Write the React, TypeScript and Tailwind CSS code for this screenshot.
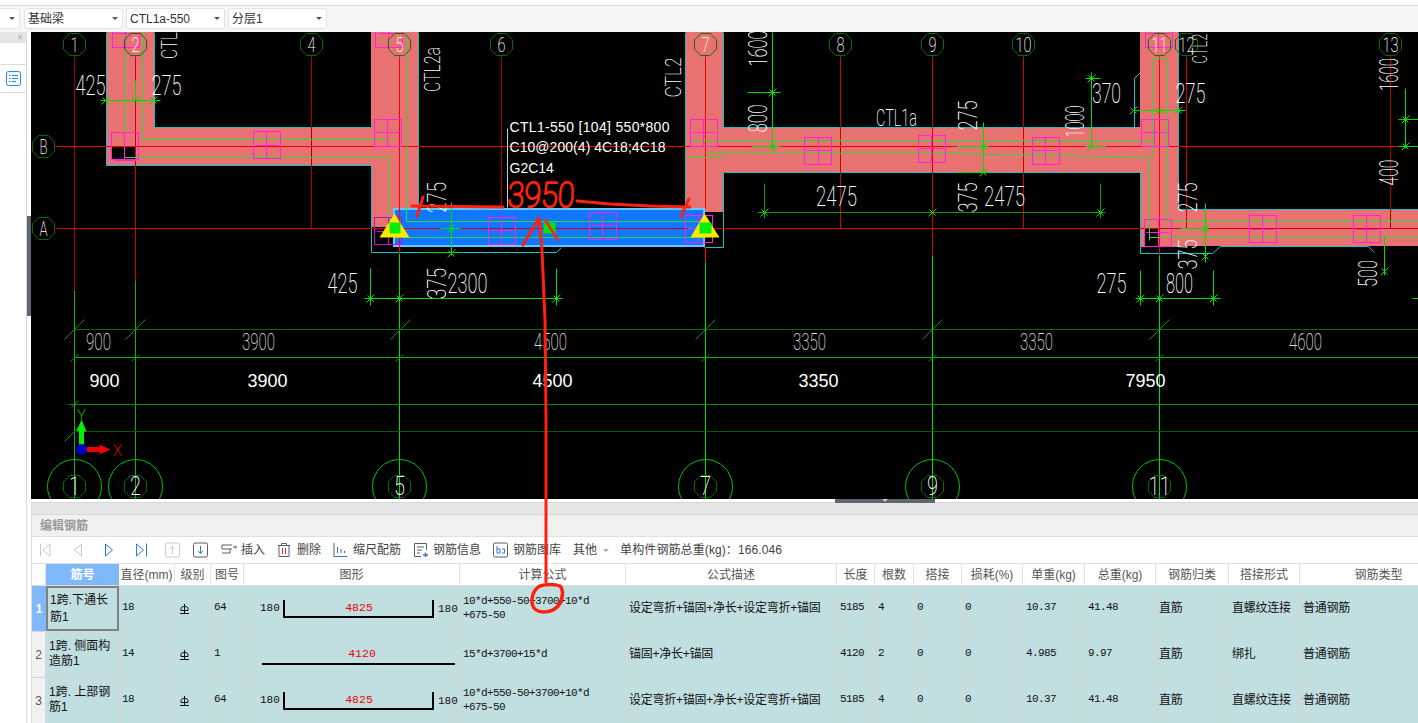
import type { ReactNode } from 'react'

const cadFont = 'Roboto, "Liberation Sans", sans-serif'
const gridCols =
  'grid grid-cols-[14px_73px_56px_36px_33px_216px_166px_211px_38px_39px_48px_61px_62px_71px_73px_71px_158px]'

const RED = '#d00000'
const DARK_RED = '#a80000'
const LIME = '#00e000'
const BEAM = '#e87272'
const CYAN = '#10c4c8'
const MAGENTA = '#ff20e0'

const headers = ['筋号', '直径(mm)', '级别', '图号', '图形', '计算公式', '公式描述', '长度', '根数', '搭接', '损耗(%)', '单重(kg)', '总重(kg)', '钢筋归类', '搭接形式', '钢筋类型']

const rows = [
  { no: '1', name: '1跨.下通长\n筋1', dia: '18', fig: '64', shape: 'u', formula: '10*d+550-50+3700+10*d\n+675-50', desc: '设定弯折+锚固+净长+设定弯折+锚固', len: '5185', n: '4', lap: '0', loss: '0', unit: '10.37', total: '41.48', cat: '直筋', conn: '直螺纹连接', type: '普通钢筋' },
  { no: '2', name: '1跨. 侧面构\n造筋1', dia: '14', fig: '1', shape: 'line', formula: '15*d+3700+15*d', desc: '锚固+净长+锚固', len: '4120', n: '2', lap: '0', loss: '0', unit: '4.985', total: '9.97', cat: '直筋', conn: '绑扎', type: '普通钢筋' },
  { no: '3', name: '1跨. 上部钢\n筋1', dia: '18', fig: '64', shape: 'u', formula: '10*d+550-50+3700+10*d\n+675-50', desc: '设定弯折+锚固+净长+设定弯折+锚固', len: '5185', n: '4', lap: '0', loss: '0', unit: '10.37', total: '41.48', cat: '直筋', conn: '直螺纹连接', type: '普通钢筋' },
]

// thin stretched CAD lettering, rotated when the label runs along a vertical dimension
function Label({ x, y, t, w, size = 27, rot = false, fill = '#fff' }: { x: number; y: number; t: string; w: number; size?: number; rot?: boolean; fill?: string }) {
  return (
    <text
      transform={`translate(${x} ${y})${rot ? ' rotate(-90)' : ''}`}
      textAnchor="middle"
      textLength={w}
      lengthAdjust="spacingAndGlyphs"
      fontFamily={cadFont}
      fontWeight={200}
      fontSize={size}
      fill={fill}
    >
      {t}
    </text>
  )
}

function octagon(x: number, y: number) {
  return [0, 1, 2, 3, 4, 5, 6, 7]
    .map((i) => `${x + 12 * Math.cos((i * Math.PI) / 4 + 0.39)},${y + 12 * Math.sin((i * Math.PI) / 4 + 0.39)}`)
    .join(' ')
}

function Bubble({ x, y, t }: { x: number; y: number; t: string }) {
  return (
    <g>
      <polygon points={octagon(x, y)} fill="none" stroke="#087008" strokeWidth={1} />
      <Label x={x} y={y + 7} t={t} w={t.length * 8} size={20} />
    </g>
  )
}

function FootBubble({ x, t }: { x: number; t: string }) {
  return (
    <g>
      <circle cx={x} cy={486} r={27} fill="none" stroke="#00c000" strokeWidth={1} />
      <polygon points={octagon(x, 486)} fill="none" stroke="#087008" strokeWidth={1} />
      <Label x={x} y={494} t={t} w={t.length * 11} size={26} />
    </g>
  )
}

function Tick({ x, y, c = LIME }: { x: number; y: number; c?: string }) {
  return <path d={`M${x - 4} ${y + 4}L${x + 4} ${y - 4}M${x - 3} ${y - 3}L${x + 3} ${y + 3}`} stroke={c} fill="none" strokeWidth={1} />
}

function Box({ x, y, w = 27, h = 27, c = MAGENTA, cx, cy }: { x: number; y: number; w?: number; h?: number; c?: string; cx?: number; cy?: number }) {
  const vx = cx ?? x + Math.floor(w / 2)
  const hy = cy ?? y + Math.floor(h / 2)
  return (
    <g stroke={c} fill="none" strokeWidth={1}>
      <rect x={x} y={y} width={w} height={h} />
      <path d={`M${vx} ${y}V${y + h}M${x + 2} ${hy}H${x + w - 2}`} />
    </g>
  )
}

function CadDrawing() {
  return (
    <svg className="block h-[467px] w-[1387px] shrink-0" viewBox="31 32 1387 467">
      <rect x={31} y={32} width={1387} height={467} fill="#000" />

      {/* beams */}
      <g fill={BEAM} stroke="none">
        <rect x={107} y={32} width={47} height={133} />
        <rect x={107} y={127} width={311} height={38} />
        <rect x={371} y={32} width={47} height={186} />
        <rect x={371} y={165} width={23} height={62} />
        <rect x={686} y={32} width={37} height={180} />
        <rect x={723} y={127} width={417} height={45} />
        <rect x={1140} y={32} width={38} height={215} />
        <rect x={1178} y={209} width={240} height={37} />
      </g>
      <rect x={111} y={147} width={24} height={13} fill="#000" />
      <rect x={1144} y={228} width={15} height={18} fill="#000" />

      {/* selected beam */}
      <rect x={394} y={209} width={310} height={37} fill="#1177ff" stroke="#62c8ff" strokeWidth={2} />

      {/* half-pixel offset keeps the 1px strokes on whole pixels */}
      <g transform="translate(0.5 0.5)">
        {/* beam outlines */}
        <g stroke={CYAN} fill="none" strokeWidth={1}>
          <path d="M106 32V165H371V252H556L561 247" />
          <path d="M154 32V127H371M418 32V208" />
          <path d="M685 32V208M723 247V172H1140V253H1212L1220 246H1368L1374 252" />
          <path d="M723 32V127H1134V78L1140 72" />
          <path d="M1178 32V209H1418" />
          <path d="M723 247H704" />
        </g>

        {/* grid axes */}
        <g fill="none" strokeWidth={1}>
          <path d="M74 56V290" stroke={DARK_RED} />
          <path d="M135 56V280" stroke={RED} />
          <path d="M311 56V228" stroke={DARK_RED} />
          <path d="M399 56V253" stroke="#ff0000" />
          <path d="M501 56V208" stroke={DARK_RED} />
          <path d="M705 56V208M705 246V262" stroke="#ff0000" />
          <path d="M840 56V228" stroke={RED} />
          <path d="M932 56V255" stroke={RED} />
          <path d="M1023 56V228" stroke={RED} />
          <path d="M1159 56V255" stroke="#ff0000" />
          <path d="M1186 56V228" stroke={RED} />
          <path d="M1390 56V228" stroke={DARK_RED} />
          <path d="M55 146H1418" stroke="#f00000" />
          <path d="M55 228H1418" stroke={RED} />
        </g>

        {/* rebar lines */}
        <g stroke="#30d830" fill="none" strokeWidth={1}>
          <path d="M124 32V157H389V230" />
          <path d="M142 32V139H392" />
          <path d="M406 32V221H705" />
          <path d="M393 237H705" />
          <path d="M690 140H1150" />
          <path d="M706 153H950L1149 157V240" />
          <path d="M1153 156V58H1166V221H1418" />
          <path d="M1149 237H1418" />
          <path d="M722 157H685" />
        </g>

        {/* bar marks */}
        <Box x={111} y={132} cx={124} cy={160} />
        <Box x={253} y={131} cy={145} />
        <Box x={374} y={119} cx={387} cy={132} />
        <Box x={374} y={217} c="#d000d0" cx={388} cy={231} />
        <Box x={112} y={20} />
        <Box x={375} y={20} />
        <Box x={488} y={217} />
        <Box x={589} y={212} cy={225} />
        <Box x={690} y={119} />
        <Box x={804} y={137} cx={818} cy={150} />
        <Box x={918} y={135} cy={148} />
        <Box x={1032} y={137} cy={150} />
        <Box x={1141} y={119} cx={1154} cy={132} />
        <Box x={1144} y={219} cx={1158} cy={232} />
        <Box x={1249} y={215} cy={229} />
        <Box x={1353} y={215} cy={229} />
        <Box x={1145} y={20} />
        <Box x={685} y={215} />

        {/* support markers */}
        <polygon points="394,213 379,237 409,237" fill="#ffe800" />
        <polygon points="704,213 690,237 719,237" fill="#ffe800" />
        <rect x={389} y={222} width={11} height={11} fill="#00f000" />
        <rect x={699} y={222} width={12} height={11} fill="#00f000" />
        <rect x={543} y={222} width={12} height={11} fill="#00e800" />

        {/* dimension lines */}
        <g stroke={LIME} fill="none" strokeWidth={1}>
          <path d="M100 100H160M135 80V100" />
          <path d="M451 202V255M440 228H460M420 252H460" />
          <path d="M364 298H562M370 268V305M399 253V499M556 268V305" />
          <path d="M705 262V499" />
          <path d="M772 32V150M747 92H780M752 146H780" />
          <path d="M983 122V172M956 146H988M956 172H988" />
          <path d="M1091 72V146M1085 78H1100M1085 146H1105" />
          <path d="M1133 110H1185" />
          <path d="M1205 203V262M1180 228H1208" />
          <path d="M1135 298H1220M1140 270V305M1213 270V305M1159 255V499" />
          <path d="M1384 235V275M1405 88V148M1398 119H1418M1398 146H1418M1412 298H1418" />
          <path d="M932 255V499" />
        </g>
        <path d="M74 290V499M135 280V499" stroke="#10b010" fill="none" />
        <path d="M757 212H1105M764 183V218M1100 183V218" stroke="#0a9a0a" strokeWidth={1} fill="none" />
        <path d="M74 329H1418" stroke="#0a6a0a" strokeWidth={1} />
        <path d="M74 357H1418" stroke="#10b010" strokeWidth={1} />
        <path d="M68 404H1418" stroke="#0a8a0a" strokeWidth={1} />
        <path d="M85 431H1418" stroke="#075a07" strokeWidth={1} />
        {[
          [105, 100], [135, 100], [153, 100], [451, 228], [451, 253], [370, 298], [399, 298], [556, 298], [772, 92], [772, 146],
          [983, 146], [983, 172], [1091, 78], [1091, 146], [1133, 110], [1159, 110], [1178, 110], [764, 212], [932, 212], [1100, 212],
          [1205, 228], [1205, 256], [1140, 298], [1159, 298], [1213, 298], [1384, 271], [1405, 119], [1405, 146],
        ].map(([x, y]) => (
          <Tick key={`${x}-${y}`} x={x} y={y} />
        ))}
        <path d="M64 339L84 319M125 339L145 319M390 339L410 319M695 339L715 319M922 339L942 319M1149 339L1169 319M70 361L78 354M131 361L139 354M395 361L403 354M701 361L709 354M928 361L936 354M1155 361L1163 354M71 407L78 400M64 441L82 423" stroke="#0a8a0a" fill="none" />

        {/* axis bubbles */}
        {[
          [74, '1'], [135, '2'], [311, '4'], [399, '5'], [501, '6'], [705, '7'], [840, '8'], [932, '9'], [1023, '10'], [1159, '11'], [1186, '12'], [1390, '13'],
        ].map(([x, t]) => (
          <Bubble key={t} x={x as number} y={44} t={t as string} />
        ))}
        <Bubble x={43} y={146} t="B" />
        <Bubble x={43} y={228} t="A" />

        {/* beam names and dimensions */}
        <Label x={176} y={45} t="CTL" w={27} size={22} rot />
        <Label x={439} y={69} t="CTL2a" w={45} size={22} rot />
        <Label x={680} y={77} t="CTL2" w={40} size={22} rot />
        <Label x={896} y={125} t="CTL1a" w={41} size={23} />
        <Label x={1206} y={48} t="CTL2" w={30} size={20} rot />
        <Label x={90} y={94} t="425" w={30} />
        <Label x={166} y={94} t="275" w={30} />
        <Label x={766} y={48} t="1600" w={36} size={26} rot />
        <Label x={766} y={118} t="800" w={28} size={26} rot />
        <Label x={976} y={115} t="275" w={30} size={26} rot />
        <Label x={1106} y={102} t="370" w={29} />
        <Label x={1083} y={121} t="1000" w={32} size={26} rot />
        <Label x={1190} y={102} t="275" w={30} />
        <Label x={1397} y={74} t="1600" w={33} size={26} rot />
        <Label x={1397} y={172} t="400" w={26} size={26} rot />
        <Label x={836} y={205} t="2475" w={41} />
        <Label x={976} y={197} t="375" w={30} size={26} rot />
        <Label x={1004} y={205} t="2475" w={41} />
        <Label x={1196} y={197} t="275" w={30} size={26} rot />
        <Label x={1196} y={254} t="375" w={30} size={26} rot />
        <Label x={1111} y={292} t="275" w={30} />
        <Label x={1179} y={292} t="800" w={27} />
        <Label x={1376} y={273} t="500" w={27} size={26} rot />
        <Label x={342} y={292} t="425" w={30} />
        <Label x={445} y={283} t="375" w={31} size={26} rot />
        <Label x={467} y={292} t="2300" w={40} />
        <Label x={445} y={197} t="275" w={31} size={26} rot />

        {[
          [98, '900', 25], [258, '3900', 33], [550, '4500', 33], [809, '3350', 33], [1036, '3350', 33], [1305, '4600', 33],
        ].map(([x, t, w]) => (
          <Label key={`${x}`} x={x as number} y={349} t={t as string} w={w as number} size={24} fill="#ddd" />
        ))}
        {[
          [104, '900'], [267, '3900'], [552, '4500'], [818, '3350'], [1145, '7950'],
        ].map(([x, t]) => (
          <text key={`${x}`} x={x as number} y={386} textAnchor="middle" fontFamily="Liberation Sans, sans-serif" fontSize={18} fill="#fff">
            {t}
          </text>
        ))}

        {/* beam tag */}
        <path d="M507 128V207" stroke="#ccc" />
        <g fontFamily="Liberation Sans, sans-serif" fontSize={14} fill="#fff">
          <text x={509} y={131} textLength={160}>CTL1-550 [104] 550*800</text>
          <text x={509} y={151} textLength={156}>C10@200(4) 4C18;4C18</text>
          <text x={509} y={172}>G2C14</text>
        </g>

        {/* UCS icon */}
        <path d="M81 448V426" stroke="#00f000" strokeWidth={5} />
        <polygon points="81,419 76,431 86,431" fill="#00f000" />
        <path d="M86 449H102" stroke="#f00000" strokeWidth={5} />
        <polygon points="110,449 99,444 99,454" fill="#f00000" />
        <circle cx={81} cy={449} r={5.5} fill="#0000c0" />
        <text x={81} y={419} textAnchor="middle" fontFamily={cadFont} fontWeight={200} fontSize={15} fill="#00f000">Y</text>
        <text x={117} y={455} textAnchor="middle" fontFamily={cadFont} fontWeight={200} fontSize={16} fill="#ff0000">X</text>

        {/* axis feet */}
        {[
          [74, '1'], [135, '2'], [399, '5'], [705, '7'], [932, '9'], [1159, '11'],
        ].map(([x, t]) => (
          <FootBubble key={t} x={x as number} t={t as string} />
        ))}
      </g>
    </svg>
  )
}

// hand-drawn markup that lies over the whole window
function Markup() {
  return (
    <svg className="pointer-events-none absolute inset-0 h-[723px] w-[1418px]" viewBox="0 0 1418 723">
      <g stroke="#ff2010" strokeWidth={3} fill="none" strokeLinecap="round" strokeLinejoin="round">
        <path d="M412 206L503 207M423 197L417 216" />
        <path d="M577 201L610 204L650 206L690 207M689 199L681 216" />
        <path d="M523 245L539 218L542 250L545 320L546 420L546 582" />
        <path d="M545 220L558 240" strokeWidth={2.5} />
        <path d="M540 586C532 590 530 602 534 608C539 614 552 613 558 606C563 600 564 590 560 586C555 584 546 584 540 586Z" strokeWidth={3.5} />
      </g>
      <text transform="translate(507 207) skewX(-3)" textLength={67} lengthAdjust="spacingAndGlyphs" fontFamily="Roboto, sans-serif" fontWeight={100} fontSize={35} fill="#ff2010" stroke="#ff2010" strokeWidth={1.8} strokeLinejoin="round">
        3950
      </text>
    </svg>
  )
}

function Select({ label, className }: { label: string; className: string }) {
  return (
    <div className={`flex h-[21px] items-center justify-between rounded-[3px] border border-[#e4e4e4] bg-white pl-[3px] pr-[4px] text-[12px] text-[#333] ${className}`}>
      <span>{label}</span>
      <span className="border-x-[3px] border-t-[3px] border-x-transparent border-t-[#555]" />
    </div>
  )
}

function Icon({ w = 14, children, className = '' }: { w?: number; children: ReactNode; className?: string }) {
  return (
    <svg width={w} height={16} viewBox={`0 0 ${w} 16`} fill="none" className={`shrink-0 ${className}`}>
      {children}
    </svg>
  )
}

function GradeMark() {
  return (
    <svg width={9} height={10} viewBox="0 0 9 10" fill="none" stroke="#111" strokeWidth={1}>
      <path d="M1 6.5V4.5C1 3 2.5 2.5 4.5 2.5S8 3 8 4.5V6.5Z" />
      <path d="M4.5 0V9M0 9.5H9" />
    </svg>
  )
}

function ShapeCell({ kind }: { kind: string }) {
  const mono = 'Liberation Mono, monospace'
  if (kind === 'line') {
    return (
      <svg width={216} height={45} viewBox="0 0 216 45" className="block">
        <text x={118} y={25} textAnchor="middle" fontFamily={mono} fontSize={11.5} fill="#f00000">4120</text>
        <path d="M18 32H211" stroke="#000" strokeWidth={2} />
      </svg>
    )
  }
  return (
    <svg width={216} height={45} viewBox="0 0 216 45" className="block">
      <text x={16} y={25} fontFamily={mono} fontSize={11} fill="#111">180</text>
      <path d="M40 14V31H189V14" stroke="#000" strokeWidth={2} fill="none" />
      <text x={115} y={25} textAnchor="middle" fontFamily={mono} fontSize={11.5} fill="#f00000">4825</text>
      <text x={194} y={26} fontFamily={mono} fontSize={11} fill="#111">180</text>
    </svg>
  )
}

function Num({ children }: { children: ReactNode }) {
  return <div className="flex items-center border-r border-[#d6d6d6] pb-[2px] pl-[3px] font-['Liberation_Mono','Noto_Sans_CJK_SC',monospace] text-[11px] tracking-[-0.6px] text-[#111]">{children}</div>
}

function Txt({ children }: { children: ReactNode }) {
  return <div className="flex items-center whitespace-nowrap border-r border-[#d6d6d6] pb-[2px] pl-[3px] text-[12px] tracking-[-0.25px] text-[#111]">{children}</div>
}

export default function App() {
  return (
    <div className="relative flex h-[723px] w-[1418px] flex-col overflow-hidden bg-white font-['Liberation_Sans','Noto_Sans_CJK_SC',sans-serif]">
      {/* top selectors */}
      <div className="h-[6px] shrink-0 border-b border-[#d8d8d8] bg-white" />
      <div className="flex h-[26px] shrink-0 items-center gap-[3px] bg-[#f6f6f6] pb-[1px]">
        <Select label="" className="w-[20px] rounded-l-none border-l-0" />
        <Select label="基础梁" className="ml-[1px] w-[99px]" />
        <Select label="CTL1a-550" className="w-[99px]" />
        <Select label="分层1" className="w-[99px]" />
      </div>

      <div className="flex min-h-0 flex-1">
        {/* collapsed side panel */}
        <aside className="relative w-[31px] shrink-0">
          <div className="h-full w-[27px] border-r border-[#d8d8d8] bg-white">
            <div className="flex h-[11px] items-center justify-end bg-[#e6e6e6] pr-[3px] text-[10px] leading-none text-[#aaa]">×</div>
            <div className="h-[22px] border-b border-[#dcdcdc]" />
            <div className="flex h-[28px] items-center justify-center border-b border-[#dcdcdc]">
              <svg width={15} height={15} viewBox="0 0 15 15" fill="none" stroke="#2a82f0" strokeWidth={1}>
                <rect x={0.5} y={0.5} width={14} height={14} rx={2} />
                <path d="M3 4.5H4.5M6 4.5H12M3 7.5H4.5M6 7.5H12M3 10.5H4.5M6 10.5H10" />
              </svg>
            </div>
          </div>
          <div className="absolute left-[27px] top-[184px] h-[100px] w-[4px] bg-[#5e6670]" />
        </aside>

        <main className="flex min-w-0 flex-1 flex-col">
          <CadDrawing />

          {/* splitter */}
          <div className="relative h-[4px] shrink-0 border-b border-[#d8d8d8] bg-white">
            <div className="absolute left-[804px] top-0 flex h-[4px] w-[100px] justify-center bg-[#5e6670]">
              <span className="border-x-[3px] border-t-[3px] border-x-transparent border-t-[#c8c8c8]" />
            </div>
          </div>

          <div className="flex min-h-0 flex-1 flex-col border-l border-[#dcdcdc]">
            <div className="h-[12px] shrink-0 border-b border-[#d6d6d6] bg-[#e6e6e6]" />
            <div className="flex h-[22px] shrink-0 items-center border-b border-[#e0e0e0] bg-[#f1f1f1] pl-[8px] text-[12px] font-bold text-[#999]">编辑钢筋</div>

            {/* toolbar */}
            <div className="flex h-[27px] shrink-0 items-center border-b border-[#e0e0e0] bg-white pl-[8px] text-[12px] text-[#444]">
              <Icon w={11}>
                <path d="M.5 1.5V14.5M10 2L3 8L10 14Z" stroke="#c8c8c8" />
              </Icon>
              <Icon w={8} className="ml-[23px]">
                <path d="M7.5 2L.5 8L7.5 14Z" stroke="#c8c8c8" />
              </Icon>
              <Icon w={8} className="ml-[23px]">
                <path d="M.5 2L7.5 8L.5 14Z" stroke="#2e78d8" />
              </Icon>
              <Icon w={11} className="ml-[23px]">
                <path d="M.5 2L7.5 8L.5 14ZM10.5 1.5V14.5" stroke="#2e78d8" />
              </Icon>
              <Icon w={15} className="ml-[18px]">
                <rect x={.5} y={1} width={14} height={14} rx={1.5} stroke="#ccc" />
                <path d="M7.5 12V5M5 7L7.5 4.5L10 7" stroke="#ccc" />
              </Icon>
              <Icon w={15} className="ml-[13px]">
                <rect x={.5} y={1} width={14} height={14} rx={1.5} stroke="#556070" />
                <path d="M7.5 4V11M5 9L7.5 11.5L10 9" stroke="#2e78d8" />
              </Icon>
              <Icon w={16} className="ml-[13px]">
                <path d="M11 3H1V7H11M1 11H9V7M12 5H15.5M14 3.5L15.5 5L14 6.5" stroke="#556070" />
              </Icon>
              <span className="ml-[4px]">插入</span>
              <Icon w={14} className="ml-[12px]">
                <path d="M1 3.5H13M4.5 3.5V1.5H9.5V3.5M2 3.5V14.5H12V3.5" stroke="#556070" />
                <path d="M5.5 6V12M8.5 6V12" stroke="#e03030" />
              </Icon>
              <span className="ml-[6px]">删除</span>
              <Icon w={15} className="ml-[12px]">
                <path d="M1 1V14M4.5 5V11M8 7V11M11.5 9V11M.5 14.5H14.5" stroke="#556070" />
                <path d="M1 14.5H14" stroke="#2e78d8" />
              </Icon>
              <span className="ml-[5px]">缩尺配筋</span>
              <Icon w={16} className="ml-[12px]">
                <path d="M8 14.5H1.5V1.5H13.5V8M4 5H11M4 8H9M4 11H7" stroke="#556070" />
                <path d="M10 13H15M12.5 10.5V15" stroke="#2e78d8" strokeWidth={1.5} />
              </Icon>
              <span className="ml-[4px]">钢筋信息</span>
              <Icon w={15} className="ml-[12px]">
                <rect x={.5} y={1} width={14} height={14} rx={1.5} stroke="#556070" />
                <path d="M4 4V11H7M4 7H7V11M9 7H11.5V11H9" stroke="#2e78d8" />
              </Icon>
              <span className="ml-[5px]">钢筋图库</span>
              <span className="ml-[12px]">其他</span>
              <span className="ml-[6px] border-x-[3px] border-t-[3px] border-x-transparent border-t-[#aaa]" />
              <span className="ml-[11px] tracking-[0.1px]">单构件钢筋总重(kg)：166.046</span>
            </div>

            {/* rebar table */}
            <div className="flex-1 overflow-hidden">
              <div className={`${gridCols} h-[22px] border-b border-[#dcdcdc] bg-white text-[12px] text-[#555]`}>
                <div className="border-r border-[#e4e4e4]" />
                {headers.map((h, i) => (
                  <div key={h} className={i === 0 ? 'flex items-center justify-center bg-[#7fb9fb] font-bold text-white' : 'flex items-center justify-center whitespace-nowrap border-r border-[#e4e4e4]'}>
                    {h}
                  </div>
                ))}
              </div>
              {rows.map((r, i) => (
                <div key={r.no} className={`${gridCols} h-[46px] border-b border-[#d6d6d6] bg-[#c1dee1]`}>
                  <div className={i === 0 ? 'flex items-center justify-center bg-[#7fb9fb] text-[12px] font-bold text-white' : 'flex items-center justify-center border-r border-[#d6d6d6] bg-[#f1f1f1] text-[12px] text-[#555]'}>
                    {r.no}
                  </div>
                  <div className={i === 0 ? 'flex items-center whitespace-pre-line border-2 border-[#808080] pl-[2px] text-[12px] leading-[17px] text-[#111]' : 'flex items-center whitespace-pre-line border-r border-[#d6d6d6] pb-[2px] pl-[3px] text-[12px] leading-[15px] text-[#111]'}>
                    {r.name}
                  </div>
                  <Num>{r.dia}</Num>
                  <div className="flex items-center border-r border-[#d6d6d6] pl-[5px]">
                    <GradeMark />
                  </div>
                  <Num>{r.fig}</Num>
                  <div className="border-r border-[#d6d6d6]">
                    <ShapeCell kind={r.shape} />
                  </div>
                  <div className="flex items-center whitespace-pre-line border-r border-[#d6d6d6] pb-[2px] pl-[3px] font-['Liberation_Mono',monospace] text-[11px] leading-[14px] tracking-[-0.6px] text-[#111]">
                    {r.formula}
                  </div>
                  <Txt>{r.desc}</Txt>
                  <Num>{r.len}</Num>
                  <Num>{r.n}</Num>
                  <Num>{r.lap}</Num>
                  <Num>{r.loss}</Num>
                  <Num>{r.unit}</Num>
                  <Num>{r.total}</Num>
                  <Txt>{r.cat}</Txt>
                  <Txt>{r.conn}</Txt>
                  <Txt>{r.type}</Txt>
                </div>
              ))}
            </div>
          </div>
        </main>
      </div>

      <Markup />
    </div>
  )
}
